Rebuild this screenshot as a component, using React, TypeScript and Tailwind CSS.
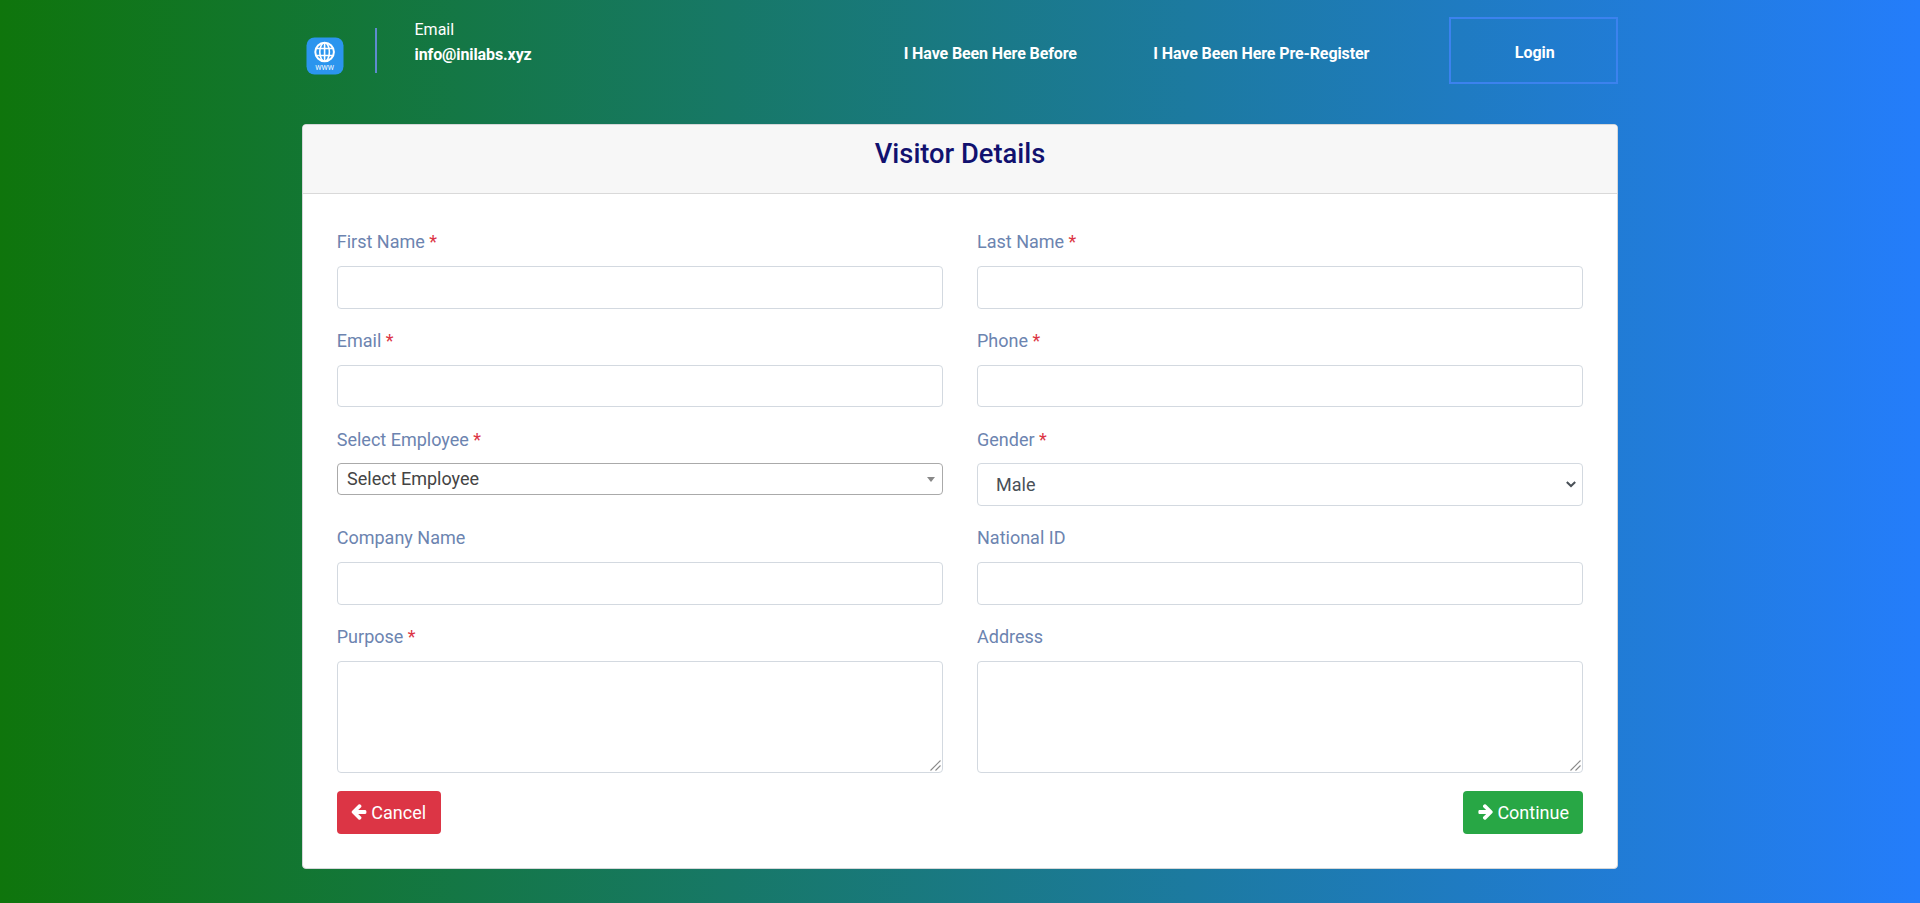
import React from "react";

function Label({ text, required }: { text: string; required?: boolean }) {
  return (
    <label className="mb-[8px] h-[28.8px] text-[18px] leading-[25.6px] text-[#6c84b0]">
      {text} {required && <span className="text-[#dc3545]">*</span>}
    </label>
  );
}

function Field({ label, required, children }: { label: string; required?: boolean; children?: React.ReactNode }) {
  return (
    <div className="flex h-[98.8px] flex-col">
      <Label text={label} required={required} />
      {children ?? <input className="h-[42.8px] w-full rounded-[4px] border border-[#d3d9e0] bg-white px-3 text-[18px] outline-none" />}
    </div>
  );
}

function Area({ label, required }: { label: string; required?: boolean }) {
  return (
    <div className="flex flex-col">
      <Label text={label} required={required} />
      <div className="relative h-[112px]">
        <textarea className="block h-full w-full resize-none rounded-[4px] border border-[#d3d9e0] bg-white outline-none" />
        <svg className="pointer-events-none absolute right-[2.5px] bottom-[2px]" width="11" height="11" viewBox="0 0 11 11" stroke="#8a8a8a" strokeWidth="1.1">
          <path d="M0.500 10.500l10-10M5.500 10.500l5-5" />
        </svg>
      </div>
    </div>
  );
}

function Logo() {
  return (
    <svg width="38" height="38" viewBox="0 0 38 38">
      <rect x="0.5" y="0.5" width="37" height="37" rx="8" fill="#2b95ee" />
      <g fill="none" stroke="#fff" strokeWidth="1.6">
        <circle cx="18.6" cy="15" r="9.3" strokeWidth="2" />
        <ellipse cx="18.6" cy="15" rx="4.8" ry="9.300" />
        <path d="M18.600 5.500v19M10.300 11.500h16.600M10.300 18.500h16.600" />
      </g>
      <text x="18.600" y="32.800" textAnchor="middle" fill="#fff" fontFamily="Roboto, sans-serif" fontSize="7" textLength="18.500">WWW</text>
    </svg>
  );
}

const leftArrow = "M1536 640v128q0 53-32.500 90.500t-84.500 37.500h-704l293 294q38 36 38 90t-38 90l-75 76q-37 37-90 37-52 0-91-37l-651-652q-37-37-37-90 0-52 37-91l651-650q38-38 91-38 52 0 90 38l75 74q38 38 38 91t-38 91l-293 293h704q52 0 84.500 37.500t32.500 90.500z";

function Arrow({ right }: { right?: boolean }) {
  return (
    <svg className={right ? "mr-[4.500px] -scale-x-100" : "mr-[4.500px]"} width="15.400" height="17" viewBox="0 -96 1536 1700" fill="currentColor">
      <path d={leftArrow} />
    </svg>
  );
}

export default function App() {
  return (
    <div className="min-h-[903px] bg-[linear-gradient(90deg,#0f750c,#247dfb)] font-['Roboto',sans-serif]">
      <div className="mx-auto w-[1316.5px]">
        <header className="flex h-[124px] items-start text-[16px] text-white">
          <div className="mt-[37px] ml-[4.25px] h-[38px] w-[38px]"><Logo /></div>
          <div className="mt-[28px] ml-[31px] h-[45px] w-[2px] bg-[#5f8bcf]" />
          <div className="mt-[17px] ml-[37.5px] flex-1">
            <div className="leading-[25px]">Email</div>
            <div className="leading-[25px] font-bold tracking-[-0.1px]">info@inilabs.xyz</div>
          </div>
          <nav className="mt-[41px] flex gap-[76.5px] leading-[25px] font-bold tracking-[-0.11px]">
            <a>I Have Been Here Before</a>
            <a>I Have Been Here Pre-Register</a>
          </nav>
          <button className="mt-[17px] ml-[80px] h-[67px] w-[169px] border-2 border-[#3c82ee] pt-[4px] pl-[2px] font-bold">Login</button>
        </header>
        <main className="h-[745px] overflow-hidden rounded-[4px] border border-[#d5d7d9] bg-white">
          <div className="h-[69px] border-b border-[#d9d9d9] bg-[#f7f7f7] pt-[12px] text-center">
            <h1 className="text-[27.3px] leading-[34px] font-medium text-[#11116f]">Visitor Details</h1>
          </div>
          <form className="px-[34px] pt-[34.95px]">
            <div className="grid grid-cols-2 gap-x-[34px]">
              <Field label="First Name" required />
              <Field label="Last Name" required />
              <Field label="Email" required />
              <Field label="Phone" required />
              <Field label="Select Employee" required>
                <div className="flex h-[32px] items-center justify-between rounded-[4px] border border-[#aaa] pr-[7.5px] pl-[9.3px] text-[18px] text-[#444]">
                  <span className="leading-[28px]">Select Employee</span>
                  <svg width="8" height="5" viewBox="0 0 8 5" fill="#888"><path d="M0 0h8L4 5z" /></svg>
                </div>
              </Field>
              <Field label="Gender" required>
                <div className="relative h-[42.8px]">
                  <select className="h-full w-full appearance-none rounded-[4px] border border-[#d3d9e0] bg-white px-[18px] text-[18px] text-[#495057] outline-none">
                    <option>Male</option>
                    <option>Female</option>
                  </select>
                  <svg className="pointer-events-none absolute top-[18px] right-[7.500px]" width="10" height="7" viewBox="0 0 10 7" fill="none" stroke="#495057" strokeWidth="2">
                    <path d="M0.800 1l4.200 4 4.200-4" />
                  </svg>
                </div>
              </Field>
              <Field label="Company Name" />
              <Field label="National ID" />
              <Area label="Purpose" required />
              <Area label="Address" />
            </div>
            <div className="mt-[18.4px] flex justify-between text-[18px] text-white">
              <button type="button" className="flex h-[43px] w-[104px] items-center justify-center rounded-[4px] bg-[#dc3545]"><Arrow />Cancel</button>
              <button type="button" className="flex h-[43px] w-[120px] items-center justify-center rounded-[4px] bg-[#28a745]"><Arrow right />Continue</button>
            </div>
          </form>
        </main>
      </div>
    </div>
  );
}
